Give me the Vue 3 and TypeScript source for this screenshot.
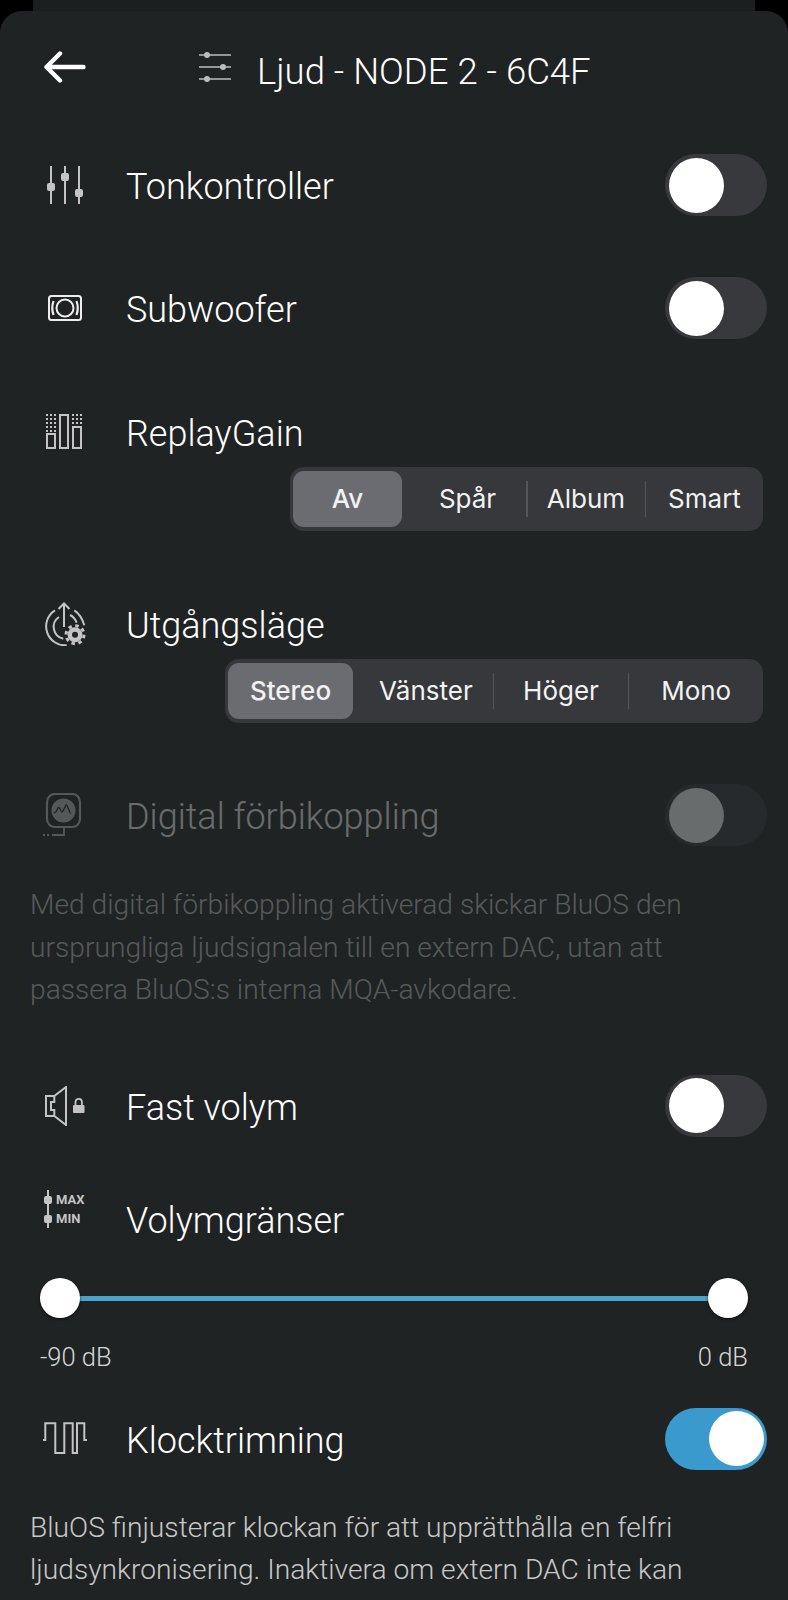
<script setup lang="ts">
interface Segment {
  label: string
  active?: boolean
}

const gainOptions: Segment[] = [
  { label: 'Av', active: true },
  { label: 'Spår' },
  { label: 'Album' },
  { label: 'Smart' }
]

const outputOptions: Segment[] = [
  { label: 'Stereo', active: true },
  { label: 'Vänster' },
  { label: 'Höger' },
  { label: 'Mono' }
]
</script>

<template>
  <div class="screen">
    <div class="sheet-behind"></div>
    <div class="sheet">
      <header class="header">
        <svg class="back" width="42" height="32" viewBox="0 0 42 32" fill="none" stroke="#fff" stroke-width="4.4" stroke-linecap="round" stroke-linejoin="round">
          <path d="M2.500 16h37M16 2.500 2.500 16 16 29.500" />
        </svg>
        <svg class="header-icon" width="33" height="30" viewBox="0 0 33 30" fill="none" stroke="#bdbdbd" stroke-width="1.6">
          <path d="M0 3h32M0 15h32M0 27h32" />
          <g fill="#bdbdbd" stroke="none">
            <circle cx="8" cy="3" r="3" />
            <circle cx="24" cy="15" r="3" />
            <circle cx="8" cy="27" r="3" />
          </g>
        </svg>
        <h1 class="title">Ljud - NODE 2 - 6C4F</h1>
      </header>

      <section class="row row-tone">
        <div class="slot">
          <svg class="icon-tone" width="38" height="38" viewBox="0 0 38 38" fill="none" stroke="#c4c4c4" stroke-width="2">
            <path d="M5 0v38M19 0v38M33 0v38" />
            <g fill="#c4c4c4" stroke="none">
              <rect x="1" y="17" width="8" height="8" rx="2" />
              <rect x="15" y="7" width="8" height="8" rx="2" />
              <rect x="29" y="23" width="8" height="8" rx="2" />
            </g>
          </svg>
        </div>
        <span class="label">Tonkontroller</span>
        <div class="toggle"><span class="knob"></span></div>
      </section>

      <section class="row row-sub">
        <div class="slot">
          <svg class="icon-sub" width="34" height="26" viewBox="0 0 34 26" fill="none" stroke="#eee" stroke-width="2">
            <rect x="1" y="1" width="32" height="24" rx="2.500" />
            <circle cx="17" cy="13" r="8.500" />
            <path d="M5.500 6q-2.500 7 0 14M28.500 6q2.500 7 0 14" stroke-width="2.200" />
          </svg>
        </div>
        <span class="label">Subwoofer</span>
        <div class="toggle"><span class="knob"></span></div>
      </section>

      <section class="row row-gain">
        <div class="slot">
          <svg class="icon-gain" width="38" height="35" viewBox="0 0 38 35" fill="none" stroke="#c4c4c4" stroke-width="2">
            <rect x="2" y="20" width="8" height="14" />
            <rect x="15" y="1" width="8" height="33" />
            <rect x="28" y="13" width="8" height="21" />
            <path d="M1 1h10M1 5h10M1 9h10M1 13h10M1 17h10M27 1h10M27 5h10M27 9h10" stroke-dasharray="2 2" stroke-width="1.800" />
          </svg>
        </div>
        <span class="label">ReplayGain</span>
      </section>
      <div class="segments segments-gain">
        <template v-for="(item, i) in gainOptions" :key="item.label">
          <span class="segment" :class="{ active: item.active }">{{ item.label }}</span>
          <i v-if="i > 0 && i < 3" class="divider"></i>
        </template>
      </div>

      <section class="row row-output">
        <div class="slot">
          <svg class="icon-output" width="42" height="44" viewBox="0 0 42 44" fill="none" stroke="#c4c4c4" stroke-width="2">
            <path d="M20 25V1.500M14.500 7 20 1.500 25.500 7" />
            <path d="M11 8.300a19 19 0 0 0 11.700 35M30.300 8.300q7 4.500 10 15" />
            <path d="M15 15a12 12 0 0 0 4.300 21.700M26 13q4.500 2 6.700 7.700" />
            <circle cx="31" cy="32.700" r="7.500" fill="#c4c4c4" stroke="none" />
            <circle cx="31" cy="32.700" r="9" stroke-width="3" stroke-dasharray="3.500 3.570" />
            <circle cx="31" cy="32.700" r="3" fill="#1f2324" stroke="none" />
          </svg>
        </div>
        <span class="label">Utgångsläge</span>
      </section>
      <div class="segments segments-output">
        <template v-for="(item, i) in outputOptions" :key="item.label">
          <span class="segment" :class="{ active: item.active }">{{ item.label }}</span>
          <i v-if="i > 0 && i < 3" class="divider"></i>
        </template>
      </div>

      <div class="disabled">
        <section class="row row-digital">
          <div class="slot">
            <svg class="icon-digital" width="40" height="44" viewBox="0 0 40 44" fill="none" stroke="#c4c4c4" stroke-width="2.200">
              <rect x="4" y="1" width="33" height="33" rx="8" />
              <circle cx="20.500" cy="17.500" r="12" fill="#c4c4c4" stroke="none" />
              <path d="M11 20q2.500-1 3.500-4t2.500 0 2 3 2-3 2-4 2.500 4 2 4" stroke="#1f2324" stroke-width="1.300" />
              <path d="M21 34v8H9M6 42H4M2 42H0" stroke-width="1.800" />
            </svg>
          </div>
          <span class="label">Digital förbikoppling</span>
          <div class="toggle"><span class="knob"></span></div>
        </section>
        <p class="note note-digital">Med digital förbikoppling aktiverad skickar BluOS den ursprungliga ljudsignalen till en extern DAC, utan att passera BluOS:s interna MQA-avkodare.</p>
      </div>

      <section class="row row-fixed">
        <div class="slot">
          <svg class="icon-fixed" width="42" height="40" viewBox="0 0 42 40" fill="none" stroke="#c4c4c4" stroke-width="2">
            <path d="M1 10h8.300L21 1v38L9.300 30H1zM9.300 10v6H6v8h3.300v6" />
            <rect x="28" y="19" width="11.500" height="8" rx="1" fill="#c4c4c4" stroke="none" />
            <path d="M30.500 19v-3a3.200 3.200 0 0 1 6.400 0v3" stroke-width="1.800" />
          </svg>
        </div>
        <span class="label">Fast volym</span>
        <div class="toggle"><span class="knob"></span></div>
      </section>

      <section class="row row-limit">
        <div class="slot">
          <span class="icon-limit">
            <svg width="8" height="38" viewBox="0 0 8 38" fill="none" stroke="#c4c4c4" stroke-width="2">
              <path d="M4 0v38" />
              <rect x="0" y="6" width="8" height="8" rx="2" fill="#c4c4c4" stroke="none" />
              <rect x="0" y="25" width="8" height="8" rx="2" fill="#c4c4c4" stroke="none" />
            </svg>
            <span class="limit-text"><b>MAX</b><b>MIN</b></span>
          </span>
        </div>
        <span class="label">Volymgränser</span>
      </section>

      <div class="slider">
        <div class="track">
          <span class="thumb"></span>
          <span class="thumb"></span>
        </div>
        <div class="slider-labels">
          <span>-90 dB</span>
          <span>0 dB</span>
        </div>
      </div>

      <section class="row row-clock">
        <div class="slot">
          <svg class="icon-clock" width="44" height="33" viewBox="0 0 44 33" fill="none" stroke="#c4c4c4" stroke-width="2">
            <path d="M0 18h2.300V1.300h10V31h9V1.300h8.400V31H34V1.300h7.300V18H44" />
          </svg>
        </div>
        <span class="label">Klocktrimning</span>
        <div class="toggle on"><span class="knob"></span></div>
      </section>
      <p class="note note-clock">BluOS finjusterar klockan för att upprätthålla en felfri ljudsynkronisering. Inaktivera om extern DAC inte kan</p>
    </div>
  </div>
</template>

<style>
html,
body {
  background: #000;
}
</style>

<style scoped>
.screen {
  position: relative;
  width: 788px;
  height: 1600px;
  overflow: hidden;
  background: #000;
  font-family: Roboto, "Liberation Sans", sans-serif;
}

.sheet-behind {
  position: absolute;
  top: -12px;
  left: 33px;
  right: 33px;
  height: 40px;
  border-radius: 14px;
  background: #1c1f20;
}

.sheet {
  position: absolute;
  top: 11px;
  left: 0;
  right: 0;
  bottom: 0;
  border-radius: 22px 22px 0 0;
  background: #1f2324;
}

.header {
  display: flex;
  align-items: center;
  height: 112px;
  padding-left: 44px;
  box-sizing: border-box;
}

.header-icon {
  margin-left: 113px;
}

.title {
  margin: 9px 0 0 25px;
  font-size: 36.500px;
  font-weight: 300;
  color: #fff;
}

.row {
  display: flex;
  align-items: center;
  padding-right: 21px;
}

.slot {
  flex: none;
  display: flex;
  align-items: center;
  width: 126px;
}

.icon-tone {
  margin-left: 46px;
}

.icon-sub {
  margin-left: 48px;
}

.icon-gain {
  margin-left: 45px;
  margin-top: -1px;
}

.icon-output {
  margin-left: 44px;
}

.icon-digital {
  margin-left: 43px;
}

.icon-fixed {
  margin-left: 45px;
}

.icon-clock {
  margin-left: 43px;
}

.icon-limit {
  display: flex;
  align-items: center;
  gap: 4px;
  margin-left: 44px;
  margin-top: -20px;
}

.limit-text {
  display: flex;
  flex-direction: column;
  font-size: 13px;
  line-height: 19.500px;
  color: #c4c4c4;
}

.label {
  margin-top: 4px;
  font-size: 36px;
  font-weight: 300;
  color: #fff;
}

.toggle {
  margin-left: auto;
  width: 102px;
  height: 62px;
  border-radius: 31px;
  background: #37393d;
  display: flex;
  align-items: center;
  padding: 0 3.500px;
  box-sizing: border-box;
}

.knob {
  width: 55px;
  height: 55px;
  border-radius: 50%;
  background: #fff;
}

.toggle.on {
  background: #3a9ace;
  justify-content: flex-end;
}

.disabled {
  opacity: 0.33;
}

.note {
  margin: 0;
  padding: 0 50px 0 30px;
  font-size: 28.200px;
  font-weight: 300;
  line-height: 42.500px;
  color: #c8c8c8;
}

.segments {
  display: flex;
  align-items: center;
  height: 64px;
  border-radius: 14px;
  background: #36383c;
  margin-left: auto;
  margin-right: 25px;
  padding-left: 3px;
  box-sizing: border-box;
  font-family: Inter, sans-serif;
  font-size: 26px;
  color: #f2f2f2;
}

.segment {
  flex: 1;
  text-align: center;
  line-height: 56px;
}

.segment.active {
  background: #6b6c72;
  border-radius: 11px;
  font-weight: 500;
}

.divider {
  flex: none;
  width: 1.500px;
  height: 36px;
  background: #54565a;
}

.segments-gain {
  width: 473px;
  margin-top: 14px;
}

.segments-gain .active {
  flex: 0 0 109px;
  margin-right: 7px;
}

.segments-output {
  width: 538px;
  margin-top: 13px;
}

.segments-output .active {
  flex: 0 0 125px;
  margin-right: 6px;
}

.row-tone {
  height: 62px;
  margin-top: 31px;
}

.row-sub {
  height: 62px;
  margin-top: 61px;
}

.row-gain {
  height: 43px;
  margin-top: 71px;
}

.row-output {
  height: 44px;
  margin-top: 71px;
}

.row-digital {
  height: 62px;
  margin-top: 61px;
}

.note-digital {
  margin-top: 38px;
}

.row-fixed {
  height: 62px;
  margin-top: 63px;
}

.row-limit {
  height: 41px;
  margin-top: 62px;
}

.slider {
  padding: 0 40px;
  margin-top: 56px;
}

.track {
  display: flex;
  align-items: center;
  justify-content: space-between;
  height: 5px;
  background: #4aa3cd;
}

.thumb {
  width: 40px;
  height: 40px;
  border-radius: 50%;
  background: #fff;
  box-shadow: 0 1px 3px rgba(0, 0, 0, 0.7);
}

.slider-labels {
  display: flex;
  justify-content: space-between;
  margin-top: 41px;
  font-size: 25.500px;
  font-weight: 300;
  color: #d6d6d6;
}

.row-clock {
  height: 62px;
  margin-top: 36px;
}

.note-clock {
  margin-top: 37px;
}
</style>
